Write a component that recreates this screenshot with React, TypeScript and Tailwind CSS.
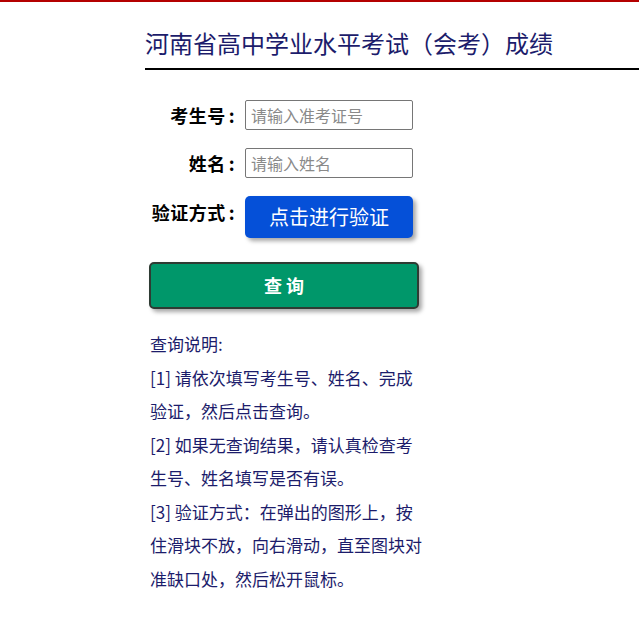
import React from 'react';

const FONT = { fontFamily: '"Noto Sans CJK SC", "Noto Sans", sans-serif' };

const NOTES = [
  '[1] 请依次填写考生号、姓名、完成验证，然后点击查询。',
  '[2] 如果无查询结果，请认真检查考生号、姓名填写是否有误。',
  '[3] 验证方式：在弹出的图形上，按住滑块不放，向右滑动，直至图块对准缺口处，然后松开鼠标。',
];

function Label({ text, className = '' }: { text: string; className?: string }) {
  return (
    <div className={`w-[90px] text-right text-[18px] font-bold text-black leading-none tracking-[0.5px] ${className}`}>
      {text}
      <span className="ml-[3px]">:</span>
    </div>
  );
}

function Field({ placeholder }: { placeholder: string }) {
  return (
    <input
      type="text"
      placeholder={placeholder}
      className="ml-[10px] w-[168px] h-[30px] px-[5px] text-[16px] border border-[#767676] rounded-[2px] placeholder-[#8a8a8a] outline-none"
    />
  );
}

export default function App() {
  return (
    <div className="min-h-[637px] bg-white overflow-hidden" style={FONT}>
      <div className="h-[2px] bg-[#b40000]" />
      <div className="pl-[145px]">
        <h1 className="pt-[24px] text-[24px] leading-[34px] text-[#1c1c6b] font-normal">
          河南省高中学业水平考试（会考）成绩
        </h1>
        <div className="mt-[8px] h-[2px] bg-black w-[600px]" />

        <div className="mt-[30px] flex flex-col">
          <div className="flex items-center">
            <Label text="考生号" />
            <Field placeholder="请输入准考证号" />
          </div>
          <div className="mt-[18px] flex items-center">
            <Label text="姓名" />
            <Field placeholder="请输入姓名" />
          </div>
          <div className="mt-[18px] flex items-start">
            <Label text="验证方式" className="pt-[7px]" />
            <button className="ml-[10px] w-[168px] h-[42px] rounded-[5px] bg-[#0550d8] text-white text-[20px] shadow-[3px_3px_4px_rgba(0,0,0,0.35)]">
              点击进行验证
            </button>
          </div>
        </div>

        <button className="mt-[24px] ml-[4px] w-[270px] h-[47px] rounded-[5px] bg-[#00976a] border-2 border-[#2e3b33] text-white text-[18px] font-bold shadow-[3px_3px_4px_rgba(0,0,0,0.35)]">
          查 询
        </button>

        <div className="mt-[18px] ml-[5px] w-[274px] text-[17px] leading-[33.5px] text-[#1c1c6b]">
          <p>查询说明:</p>
          {NOTES.map((n) => (
            <p key={n}>{n}</p>
          ))}
        </div>
      </div>
    </div>
  );
}
